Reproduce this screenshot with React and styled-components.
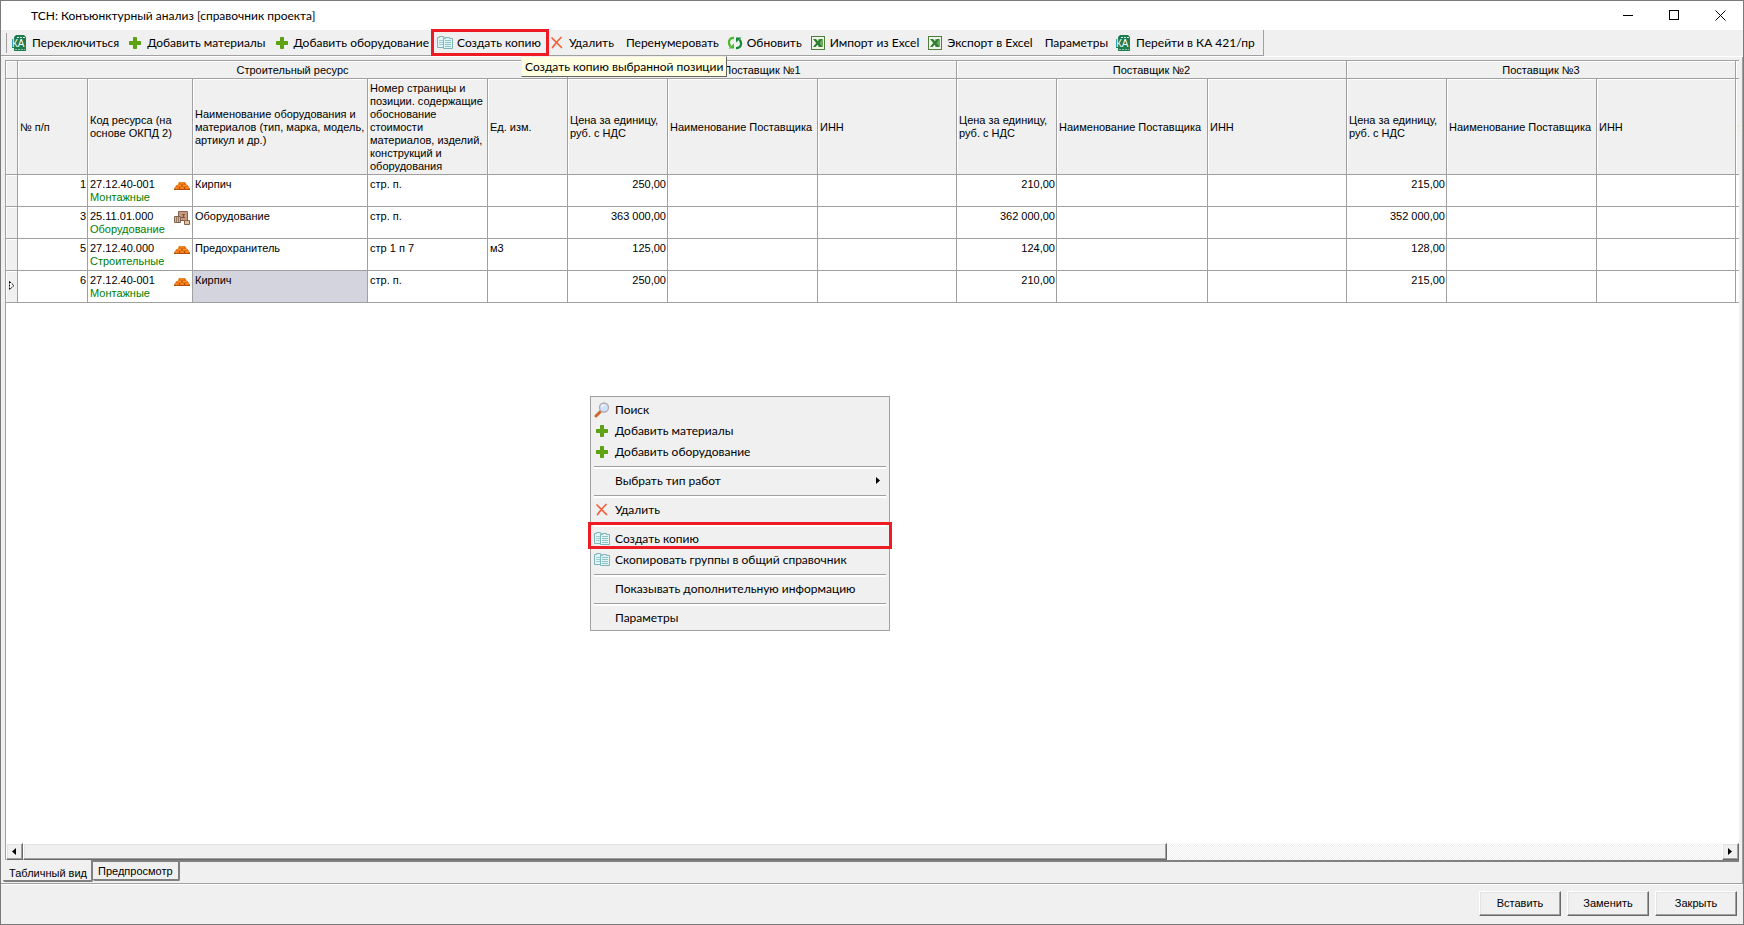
import React, { useState } from "react";
import styled, { createGlobalStyle, css } from "styled-components";

const suppliers = ["Поставщик №1", "Поставщик №2", "Поставщик №3"];
const columnWidths = [
  12, 70, 105, 175, 120, 80, 100, 150, 139, 100, 151, 139, 100, 150, 139, 100,
];

const rows = [
  {
    num: 1,
    code: "27.12.40-001",
    type: "Монтажные",
    icon: "bricks",
    name: "Кирпич",
    page: "стр. п.",
    unit: "",
    prices: ["250,00", "210,00", "215,00"],
  },
  {
    num: 3,
    code: "25.11.01.000",
    type: "Оборудование",
    icon: "boxes",
    name: "Оборудование",
    page: "стр. п.",
    unit: "",
    prices: ["363 000,00", "362 000,00", "352 000,00"],
  },
  {
    num: 5,
    code: "27.12.40.000",
    type: "Строительные",
    icon: "bricks",
    name: "Предохранитель",
    page: "стр 1 п 7",
    unit: "м3",
    prices: ["125,00", "124,00", "128,00"],
  },
  {
    num: 6,
    code: "27.12.40-001",
    type: "Монтажные",
    icon: "bricks",
    name: "Кирпич",
    page: "стр. п.",
    unit: "",
    prices: ["250,00", "210,00", "215,00"],
    current: true,
  },
];

const KaIcon = () => (
  <svg width="16" height="16" viewBox="0 0 16 16" aria-hidden="true">
    <path d="M4 0h8l2 2v14H2V2z" fill="#1e7b4c" />
    <path d="M5 2.5h8" stroke="#d5efe0" strokeDasharray="2 1" />
    <path d="M3 14.5h10" stroke="#8fcaa9" strokeDasharray="2 1" />
    <rect x="0" y="4" width="14" height="9" fill="#1e7b4c" />
    <text
      x="0"
      y="12"
      fontFamily="Liberation Sans, sans-serif"
      fontSize="10"
      fill="#fff"
    >
      КА
    </text>
  </svg>
);

const PlusIcon = () => (
  <svg width="16" height="16" viewBox="0 0 16 16" aria-hidden="true">
    <path
      d="M6.5 2.5h3v4h4v3h-4v4h-3v-4h-4v-3h4z"
      fill="#5fa512"
      stroke="#5a9c14"
      strokeLinejoin="round"
    />
  </svg>
);

const CopyIcon = () => (
  <svg width="16" height="16" viewBox="0 0 16 16" aria-hidden="true">
    <path d="M.5 2.5h2v-1h4v1h1v10h-7z" fill="#e2f4f5" stroke="#7fb5b8" />
    <path d="M2 5.5h4M2 7.5h4M2 9.5h4" stroke="#9ccdd0" />
    <path d="M6.5 3.5h2v-1h4v1h3v10h-9z" fill="#e2f4f5" stroke="#7fb5b8" />
    <path d="M8 5.5h6M8 7.5h6M8 9.5h6M8 11.5h6" stroke="#8ec3c6" />
  </svg>
);

const DeleteIcon = () => (
  <svg width="16" height="16" viewBox="0 0 16 16" aria-hidden="true">
    <path
      d="M3 3C6 6 9 9 12.5 12.5M12 2.5C8.5 6 6 9 3.5 12.5"
      fill="none"
      stroke="#f4603c"
      strokeWidth="1.7"
      strokeLinecap="round"
    />
  </svg>
);

const RefreshIcon = () => (
  <svg width="16" height="16" viewBox="0 0 16 16" aria-hidden="true">
    <path
      d="M7 2.8C2 2.5 .5 7.5 3.5 11.5"
      fill="none"
      stroke="#4cb82e"
      strokeWidth="2.2"
    />
    <path d="M1.5 13.5H7v-5z" fill="#4cb82e" />
    <path
      d="M9 13.2C14 13.5 15.5 8.5 12.5 4.5"
      fill="none"
      stroke="#138a36"
      strokeWidth="2.2"
    />
    <path d="M14.5 2.5H9v5z" fill="#138a36" />
  </svg>
);

const ExcelIcon = () => (
  <svg width="16" height="16" viewBox="0 0 16 16" aria-hidden="true">
    <rect x="1.5" y="1.5" width="13" height="13" fill="#eef5e8" stroke="#4f7d3c" />
    <path d="M8 4h5v8H8z" fill="#8cc078" />
    <path d="M9 6h4M9 8h4M9 10h4" stroke="#4c9440" />
    <path
      d="M3 4h3l2 2.3L10 4h2.5L9.4 8l3.1 4h-3L7.7 9.8 5.5 12H3l3.2-4z"
      fill="#2e7d32"
    />
  </svg>
);

const SearchIcon = () => (
  <svg width="16" height="16" viewBox="0 0 16 16" aria-hidden="true">
    <path d="M2 14l4.5-4.5" stroke="#d0662a" strokeWidth="3" strokeLinecap="round" />
    <circle cx="10" cy="5.5" r="4.5" fill="#cfe3f8" stroke="#b3a9b4" strokeWidth="1.3" />
    <path d="M7.5 5a3 3 0 0 1 3-2" fill="none" stroke="#fff" strokeWidth="1.2" />
  </svg>
);

const BricksIcon = () => (
  <svg width="16" height="16" viewBox="0 -4 16 16" aria-hidden="true">
    <path d="M5 0h6l1.5 2.5 1 .5L16 6.5V8H0V6.5L2.500 3h1.200z" fill="#e8700f" />
    <path
      d="M6 1h4M4 3.5h3.500M9 3.5h3.500M1.500 6h3M6.500 6h3M11.500 6h3"
      stroke="#ff9a2e"
    />
    <path d="M8 2.5v2M5.5 5v3M10.5 5v3M0 7.5h16" stroke="#b5500c" />
  </svg>
);

const BoxesIcon = () => (
  <svg width="16" height="16" viewBox="0 -1 16 16" aria-hidden="true">
    <path d="M4.5 .5h9v9h-9z" fill="#c79a80" stroke="#8a6350" />
    <path d="M8 3.5h3M9.5 3v3M7 6.5h4" stroke="#7d5140" />
    <path d="M.5 5.5h6v6h-6z" fill="#d3b59a" stroke="#806552" />
    <path d="M2.5 6v5M4.5 6v5" stroke="#97785f" />
    <path d="M10.5 9.5h5v4h-5z" fill="#e0bf9c" stroke="#8a6350" />
  </svg>
);

const rowIcons = { bricks: <BricksIcon />, boxes: <BoxesIcon /> };

const toolbarItems = [
  { label: "Переключиться", icon: <KaIcon /> },
  { label: "Добавить материалы", icon: <PlusIcon /> },
  { label: "Добавить оборудование", icon: <PlusIcon /> },
  { label: "Создать копию", icon: <CopyIcon />, marked: true },
  { label: "Удалить", icon: <DeleteIcon /> },
  { label: "Перенумеровать" },
  { label: "Обновить", icon: <RefreshIcon /> },
  { label: "Импорт из Excel", icon: <ExcelIcon /> },
  { label: "Экспорт в Excel", icon: <ExcelIcon /> },
  { label: "Параметры" },
  { label: "Перейти в КА 421/пр", icon: <KaIcon /> },
];

const menuGroups = [
  [
    { label: "Поиск", icon: <SearchIcon /> },
    { label: "Добавить материалы", icon: <PlusIcon /> },
    { label: "Добавить оборудование", icon: <PlusIcon /> },
  ],
  [{ label: "Выбрать тип работ", submenu: true }],
  [{ label: "Удалить", icon: <DeleteIcon /> }],
  [
    { label: "Создать копию", icon: <CopyIcon />, marked: true },
    { label: "Скопировать группы в общий справочник", icon: <CopyIcon /> },
  ],
  [{ label: "Показывать дополнительную информацию" }],
  [{ label: "Параметры" }],
];

const App = () => {
  const [tab, setTab] = useState("table");

  return (
    <>
      <GlobalStyle />
      <Window>
        <TitleBar>
          <Title>ТСН: Конъюнктурный анализ [справочник проекта]</Title>
          <WindowButton aria-label="Свернуть">
            <svg width="11" height="11" viewBox="0 0 11 11">
              <path d="M0 5.5h10" stroke="#000" />
            </svg>
          </WindowButton>
          <WindowButton aria-label="Развернуть">
            <svg width="11" height="11" viewBox="0 0 11 11">
              <rect x=".5" y=".5" width="9" height="9" fill="none" stroke="#000" />
            </svg>
          </WindowButton>
          <WindowButton aria-label="Закрыть окно">
            <svg width="11" height="11" viewBox="0 0 11 11">
              <path d="M.5 .5l10 10M10.5 .5l-10 10" stroke="#000" />
            </svg>
          </WindowButton>
        </TitleBar>

        <ToolbarArea>
          <Toolbar>
            <Grip />
            {toolbarItems.map((item) => (
              <ToolButton
                key={item.label}
                $marked={item.marked}
                $textOnly={!item.icon}
              >
                {item.icon}
                <span>{item.label}</span>
                {item.marked && (
                  <Tooltip role="tooltip">Создать копию выбранной позиции</Tooltip>
                )}
              </ToolButton>
            ))}
          </Toolbar>
        </ToolbarArea>

        <Panel>
          <Grid>
            <GridView>
              <Table>
                <colgroup>
                  {columnWidths.map((width, i) => (
                    <Column key={i} $width={width} />
                  ))}
                </colgroup>
                <thead>
                  <GroupRow>
                    <HeadCell />
                    <HeadCell colSpan={5}>Строительный ресурс</HeadCell>
                    {suppliers.map((name) => (
                      <HeadCell key={name} colSpan={3}>
                        {name}
                      </HeadCell>
                    ))}
                    <HeadCell />
                  </GroupRow>
                  <TitleRow>
                    <HeadCell />
                    <HeadCell>№ п/п</HeadCell>
                    <HeadCell>Код ресурса (на основе ОКПД 2)</HeadCell>
                    <HeadCell>
                      Наименование оборудования и материалов (тип, марка, модель,
                      артикул и др.)
                    </HeadCell>
                    <HeadCell>
                      Номер страницы и позиции. содержащие обоснование стоимости
                      материалов, изделий, конструкций и оборудования
                    </HeadCell>
                    <HeadCell>Ед. изм.</HeadCell>
                    {suppliers.map((name) => (
                      <React.Fragment key={name}>
                        <HeadCell>Цена за единицу, руб. с НДС</HeadCell>
                        <HeadCell>Наименование Поставщика</HeadCell>
                        <HeadCell>ИНН</HeadCell>
                      </React.Fragment>
                    ))}
                    <HeadCell>:</HeadCell>
                  </TitleRow>
                </thead>
                <tbody>
                  {rows.map((row) => (
                    <tr key={row.num}>
                      <Indicator>
                        {row.current && (
                          <svg width="6" height="9" viewBox="0 0 6 9">
                            <path
                              d="M.5 .5v8l4.5-4z"
                              fill="#fff"
                              stroke="#000"
                              strokeDasharray="2 1"
                            />
                          </svg>
                        )}
                      </Indicator>
                      <Cell $right>{row.num}</Cell>
                      <Cell>
                        <CodeBox>
                          <div>
                            {row.code}
                            <ResourceType>{row.type}</ResourceType>
                          </div>
                          {rowIcons[row.icon]}
                        </CodeBox>
                      </Cell>
                      <Cell $selected={row.current}>{row.name}</Cell>
                      <Cell>{row.page}</Cell>
                      <Cell>{row.unit}</Cell>
                      {row.prices.map((price, i) => (
                        <React.Fragment key={i}>
                          <Cell $right>{price}</Cell>
                          <Cell />
                          <Cell />
                        </React.Fragment>
                      ))}
                      <Cell />
                    </tr>
                  ))}
                </tbody>
              </Table>
            </GridView>
            <ScrollBar>
              <ScrollArrow aria-label="Прокрутить влево">
                <svg width="4" height="7" viewBox="0 0 4 7">
                  <path d="M4 0v7L0 3.5z" />
                </svg>
              </ScrollArrow>
              <ScrollThumb />
              <ScrollTrack />
              <ScrollArrow aria-label="Прокрутить вправо">
                <svg width="4" height="7" viewBox="0 0 4 7">
                  <path d="M0 0v7l4-3.5z" />
                </svg>
              </ScrollArrow>
            </ScrollBar>
          </Grid>
          <Tabs role="tablist">
            <Tab
              role="tab"
              aria-selected={tab === "table"}
              $active={tab === "table"}
              onClick={() => setTab("table")}
            >
              Табличный вид
            </Tab>
            <Tab
              role="tab"
              aria-selected={tab === "preview"}
              $active={tab === "preview"}
              onClick={() => setTab("preview")}
            >
              Предпросмотр
            </Tab>
          </Tabs>
        </Panel>

        <Footer>
          <DialogButton>Вставить</DialogButton>
          <DialogButton>Заменить</DialogButton>
          <DialogButton>Закрыть</DialogButton>
        </Footer>

        <Menu role="menu">
          {menuGroups.map((group, i) => (
            <MenuGroup key={i}>
              {group.map((item) => (
                <MenuItem key={item.label} role="menuitem" $marked={item.marked}>
                  <MenuIcon>{item.icon}</MenuIcon>
                  <MenuLabel>{item.label}</MenuLabel>
                  {item.submenu && (
                    <svg width="4" height="7" viewBox="0 0 4 7">
                      <path d="M0 0v7l4-3.5z" />
                    </svg>
                  )}
                </MenuItem>
              ))}
            </MenuGroup>
          ))}
        </Menu>
      </Window>
    </>
  );
};

const GlobalStyle = createGlobalStyle`
  * {
    box-sizing: border-box;
  }

  body {
    margin: 0;
    background: #f0f0f0;
    color: #000;
    font-family: Lato, Roboto, sans-serif;
    font-size: 12px;
  }

  button {
    margin: 0;
    padding: 0;
    border: 0;
    background: none;
    color: inherit;
    font: inherit;
  }

  svg {
    flex: none;
  }
`;

const gridFont = css`
  font-family: "Liberation Sans", Arial, sans-serif;
  font-size: 11px;
  line-height: 13px;
`;

const redFrame = css`
  &::after {
    content: "";
    position: absolute;
    border: 3px solid #ed1c24;
    pointer-events: none;
  }
`;

const Window = styled.div`
  position: relative;
  display: flex;
  flex-direction: column;
  height: 100vh;
  min-height: 640px;
  overflow: hidden;
  border: 1px solid #7a7a7a;
`;

const TitleBar = styled.header`
  display: flex;
  align-items: center;
  height: 29px;
  padding-left: 30px;
  background: #fff;
`;

const Title = styled.div`
  flex: 1;
`;

const WindowButton = styled.button`
  display: flex;
  align-items: center;
  justify-content: center;
  width: 46px;
  height: 29px;
`;

const ToolbarArea = styled.div`
  display: flex;
  height: 27px;
  border-bottom: 1px solid #fff;
`;

const Toolbar = styled.div`
  display: flex;
  align-items: center;
  padding-left: 5px;
  border-right: 1px solid #a0a0a0;
  border-bottom: 1px solid #a0a0a0;
  white-space: nowrap;
`;

const Grip = styled.div`
  width: 1px;
  height: 20px;
  margin-right: 5px;
  background: #a0a0a0;
`;

const ToolButton = styled.button`
  position: relative;
  display: flex;
  align-items: center;
  gap: 4px;
  height: 24px;
  margin-right: 8px;
  padding-left: ${(props) => (props.$textOnly ? "4px" : "0")};

  ${(props) =>
    props.$marked &&
    css`
      ${redFrame}

      &::after {
        top: -2px;
        right: -8px;
        bottom: -1px;
        left: -6px;
      }
    `}
`;

const Tooltip = styled.span`
  position: absolute;
  top: 25px;
  left: 84px;
  z-index: 2;
  padding: 1px 3px;
  border: 1px solid #f0f0f0;
  border-right-color: #646464;
  border-bottom-color: #646464;
  background: #ffffe1;
  line-height: 17px;
`;

const Panel = styled.main`
  display: flex;
  flex: 1;
  flex-direction: column;
  min-height: 0;
  padding: 3px 3px 0 1px;
  border-right: 1px solid #a0a0a0;
`;

const Grid = styled.div`
  display: flex;
  flex: 1;
  flex-direction: column;
  min-height: 0;
  margin-left: 3px;
  border-top: 1px solid #a0a0a0;
  border-bottom: 2px solid #808080;
  border-left: 1px solid #a0a0a0;
  background: #fff;
`;

const GridView = styled.div`
  flex: 1;
  overflow: hidden;
`;

const Table = styled.table`
  width: max-content;
  table-layout: fixed;
  border-collapse: separate;
  border-spacing: 0;
  ${gridFont}
`;

const Column = styled.col`
  width: ${(props) => props.$width}px;
`;

const HeadCell = styled.th`
  padding: 1px 2px 0;
  border-right: 1px solid #a0a0a0;
  border-bottom: 1px solid #a0a0a0;
  background: #f0f0f0;
  box-shadow: inset 1px 1px #fff;
  font-weight: normal;
`;

const GroupRow = styled.tr`
  height: 18px;
`;

const TitleRow = styled.tr`
  height: 96px;

  ${HeadCell} {
    text-align: left;
  }
`;

const Cell = styled.td`
  height: 32px;
  padding: 3px 1px 2px 2px;
  border-right: 1px solid #a0a0a0;
  border-bottom: 1px solid #a0a0a0;
  background: ${(props) => (props.$selected ? "#d4d4de" : "#fff")};
  text-align: ${(props) => (props.$right ? "right" : "left")};
  vertical-align: top;
`;

const Indicator = styled.td`
  padding: 0 0 0 3px;
  border-right: 1px solid #a0a0a0;
  border-bottom: 1px solid #a0a0a0;
  background: #f0f0f0;
  box-shadow: inset 1px 1px #fff;
`;

const CodeBox = styled.div`
  display: flex;
  align-items: flex-start;
  justify-content: space-between;
  padding-right: 1px;
`;

const ResourceType = styled.div`
  color: #008000;
`;

const raised = css`
  border: 1px solid #fff;
  border-right-color: #696969;
  border-bottom-color: #696969;
  background: #f0f0f0;
  box-shadow: inset -1px -1px #a0a0a0, inset 1px 1px #e3e3e3;
`;

const ScrollBar = styled.div`
  display: flex;
  height: 17px;
`;

const ScrollArrow = styled.button`
  display: flex;
  align-items: center;
  justify-content: center;
  width: 17px;
  padding-right: 1px;
  ${raised}
`;

const ScrollThumb = styled.div`
  width: 66%;
  ${raised}
`;

const ScrollTrack = styled.div`
  flex: 1;
  background: repeating-conic-gradient(#f0f0f0 0 25%, #fff 0 50%) 0 0 / 2px 2px;
`;

const Tabs = styled.div`
  display: flex;
  align-items: flex-start;
  height: 21px;
  margin-left: 1px;
`;

const Tab = styled.button`
  position: relative;
  height: ${(props) => (props.$active ? "22px" : "19px")};
  margin-top: ${(props) => (props.$active ? "-2px" : "0")};
  padding: ${(props) => (props.$active ? "6px 4px 0 6px" : "2px 5px 0")};
  border-right: 2px solid #808080;
  border-bottom: 2px solid #808080;
  border-radius: 0 0 2px 2px;
  background: #f0f0f0;
  ${gridFont}
`;

const Footer = styled.footer`
  display: flex;
  justify-content: flex-end;
  gap: 6px;
  height: 41px;
  padding: 7px 6px 0;
  border-top: 1px solid #a0a0a0;
  box-shadow: inset 0 1px #fff;
`;

const DialogButton = styled.button`
  width: 82px;
  height: 25px;
  ${gridFont}
  ${raised}
`;

const Menu = styled.div`
  position: absolute;
  top: 395px;
  left: 589px;
  width: 300px;
  padding: 2px;
  border: 1px solid #a0a0a0;
  background: #f0f0f0;
`;

const MenuGroup = styled.div`
  & + & {
    position: relative;
    padding-top: 8px;
  }

  & + &::before {
    content: "";
    position: absolute;
    top: 4px;
    right: 1px;
    left: 1px;
    height: 2px;
    border-top: 1px solid #a0a0a0;
    background: #fff;
  }
`;

const MenuItem = styled.button`
  position: relative;
  display: flex;
  align-items: center;
  width: 100%;
  height: 21px;
  padding: 0 7px 0 1px;
  text-align: left;

  ${(props) =>
    props.$marked &&
    css`
      ${redFrame}

      &::after {
        top: -6px;
        right: -5px;
        bottom: 0;
        left: -5px;
      }
    `}
`;

const MenuIcon = styled.span`
  display: flex;
  width: 21px;
`;

const MenuLabel = styled.span`
  flex: 1;
`;

export default App;
